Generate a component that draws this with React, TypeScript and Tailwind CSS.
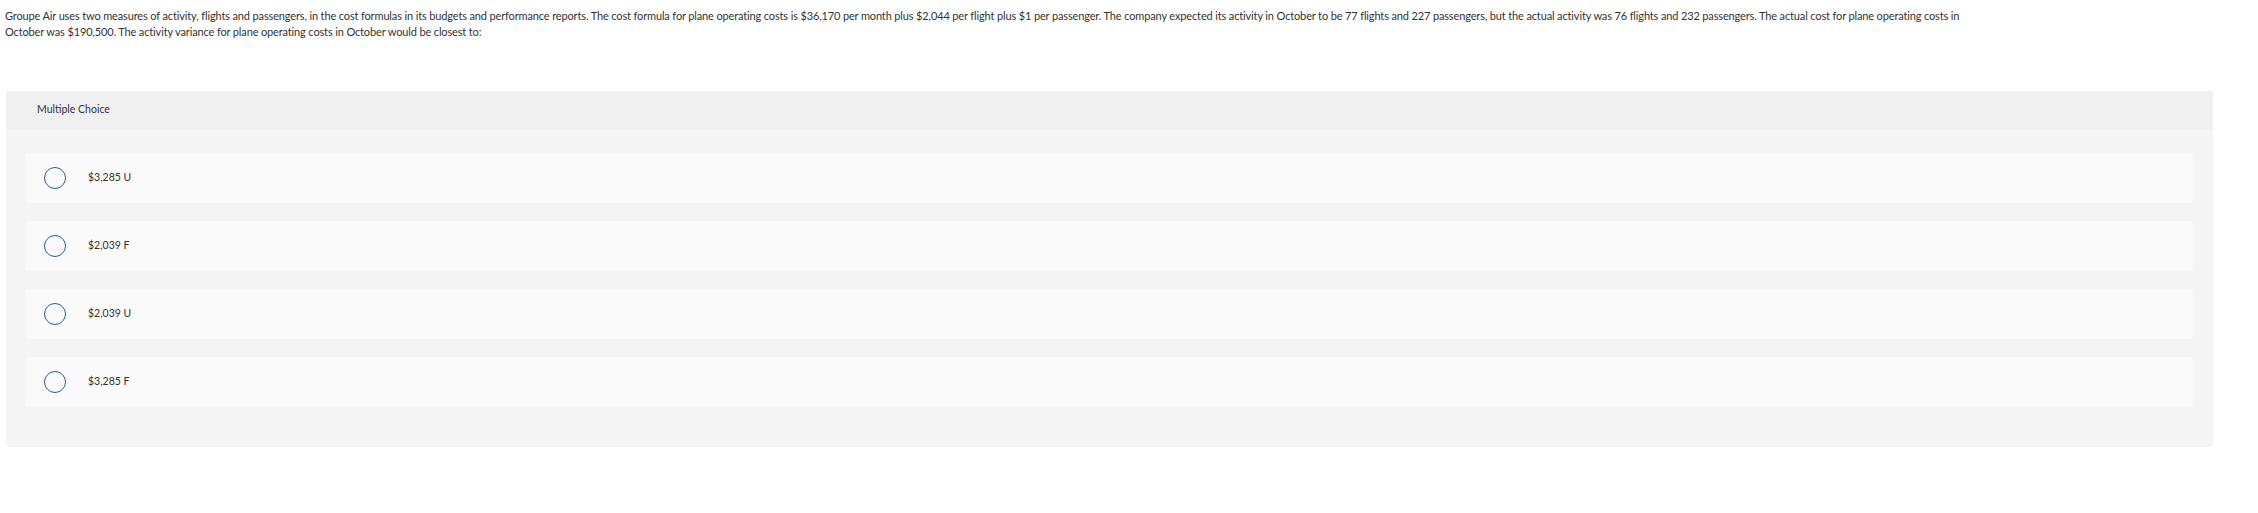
import React from "react";

const options = ["$3,285 U", "$2,039 F", "$2,039 U", "$3,285 F"];

export default function App() {
  return (
    <div className="w-[2258px] h-[513px] bg-white" style={{ fontFamily: "Lato, 'Open Sans', sans-serif" }}>
      <p className="pl-[5px] pt-[8px] w-[2000px] text-[11px] leading-[16px] tracking-[-0.14px] text-[#333333]">
        Groupe Air uses two measures of activity, flights and passengers, in the cost formulas in its budgets and performance reports. The cost formula for plane operating costs is $36,170 per month plus $2,044 per flight plus $1 per passenger. The company expected its activity in October to be 77 flights and 227 passengers, but the actual activity was 76 flights and 232 passengers. The actual cost for plane operating costs in October was $190,500. The activity variance for plane operating costs in October would be closest to:
      </p>
      <div className="ml-[6px] mt-[51px] w-[2207px] rounded-b-[3px] bg-[#f5f5f5]">
        <div className="h-[38px] bg-[#f0f0f0] pl-[31px] flex items-center text-[10.5px] text-[#333344]">
          Multiple Choice
        </div>
        <div className="pl-[19px] pr-[20px] pt-[24px] pb-[40px] flex flex-col gap-[18px]">
          {options.map((o) => (
            <div key={o} className="h-[50px] rounded-[3px] bg-[#fafafa] flex items-center pl-[19px]">
              <span className="w-[22px] h-[22px] rounded-full border-[1.5px] border-[#2a5f94]" />
              <span className="ml-[22px] text-[10.5px] text-[#333333]">{o}</span>
            </div>
          ))}
        </div>
      </div>
    </div>
  );
}
